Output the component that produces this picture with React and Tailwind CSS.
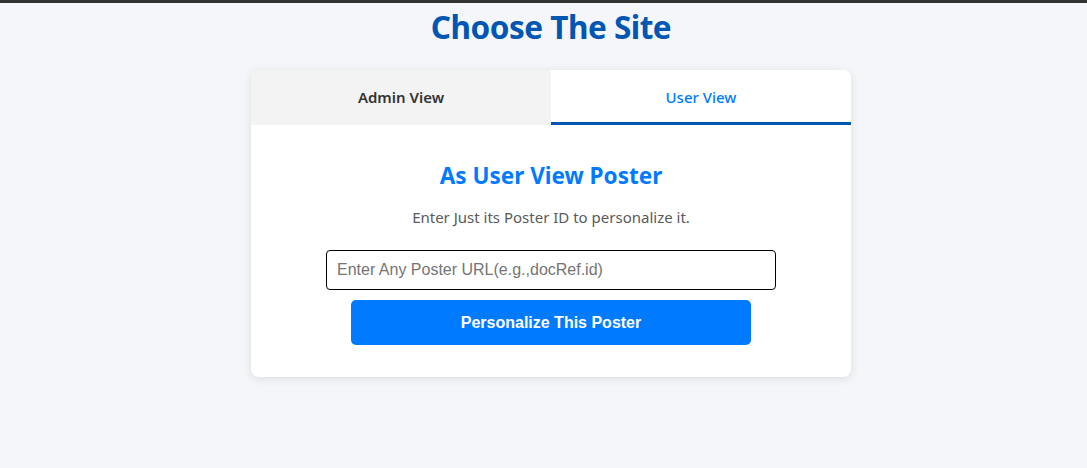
export default function App() {
    return (
        <div className="min-h-[468px] bg-[#f5f6fa] border-t-[3px] border-[#333333] pl-[15px]" style={{ fontFamily: '"Noto Sans", sans-serif' }}>
            <h1 className="text-center text-[31.5px] font-bold text-[#0056b3] leading-[40px] pt-[4px] tracking-[-0.5px]">
                Choose The Site
            </h1>

            <div className="w-[600px] mx-auto mt-[23px] bg-white rounded-[8px] shadow-[0_2px_10px_rgba(0,0,0,0.1)] overflow-hidden">
                {/* Tabs */}
                <div className="flex h-[55px]">
                    <button className="flex-1 bg-[#f3f3f3] text-[15px] font-semibold text-[#333333]">
                        Admin View
                    </button>
                    <button className="flex-1 bg-white text-[15px] font-medium text-[#007bff] border-b-[3px] border-[#0056b3] pt-[3px]">
                        User View
                    </button>
                </div>

                <div className="flex flex-col items-center pt-[36px] pb-[32px]">
                    <h2 className="text-[22.5px] font-bold text-[#007bff] leading-[30px]">As User View Poster</h2>
                    <p className="mt-[15px] text-[15px] text-[#5a5a5a] leading-[22px]">Enter Just its Poster ID to personalize it.</p>
                    <input
                        type="text"
                        placeholder="Enter Any Poster URL(e.g.,docRef.id)"
                        className="mt-[22px] w-[450px] h-[40px] px-[10px] border border-black rounded-[4px] text-[16px] placeholder:text-[#757575] outline-none"
                        style={{ fontFamily: '"Liberation Sans", Arial, sans-serif' }}
                    />
                    <button
                        className="mt-[10px] w-[400px] h-[45px] bg-[#007bff] rounded-[5px] text-white text-[16px] font-bold"
                        style={{ fontFamily: '"Liberation Sans", Arial, sans-serif' }}
                    >
                        Personalize This Poster
                    </button>
                </div>
            </div>
        </div>
    );
}
